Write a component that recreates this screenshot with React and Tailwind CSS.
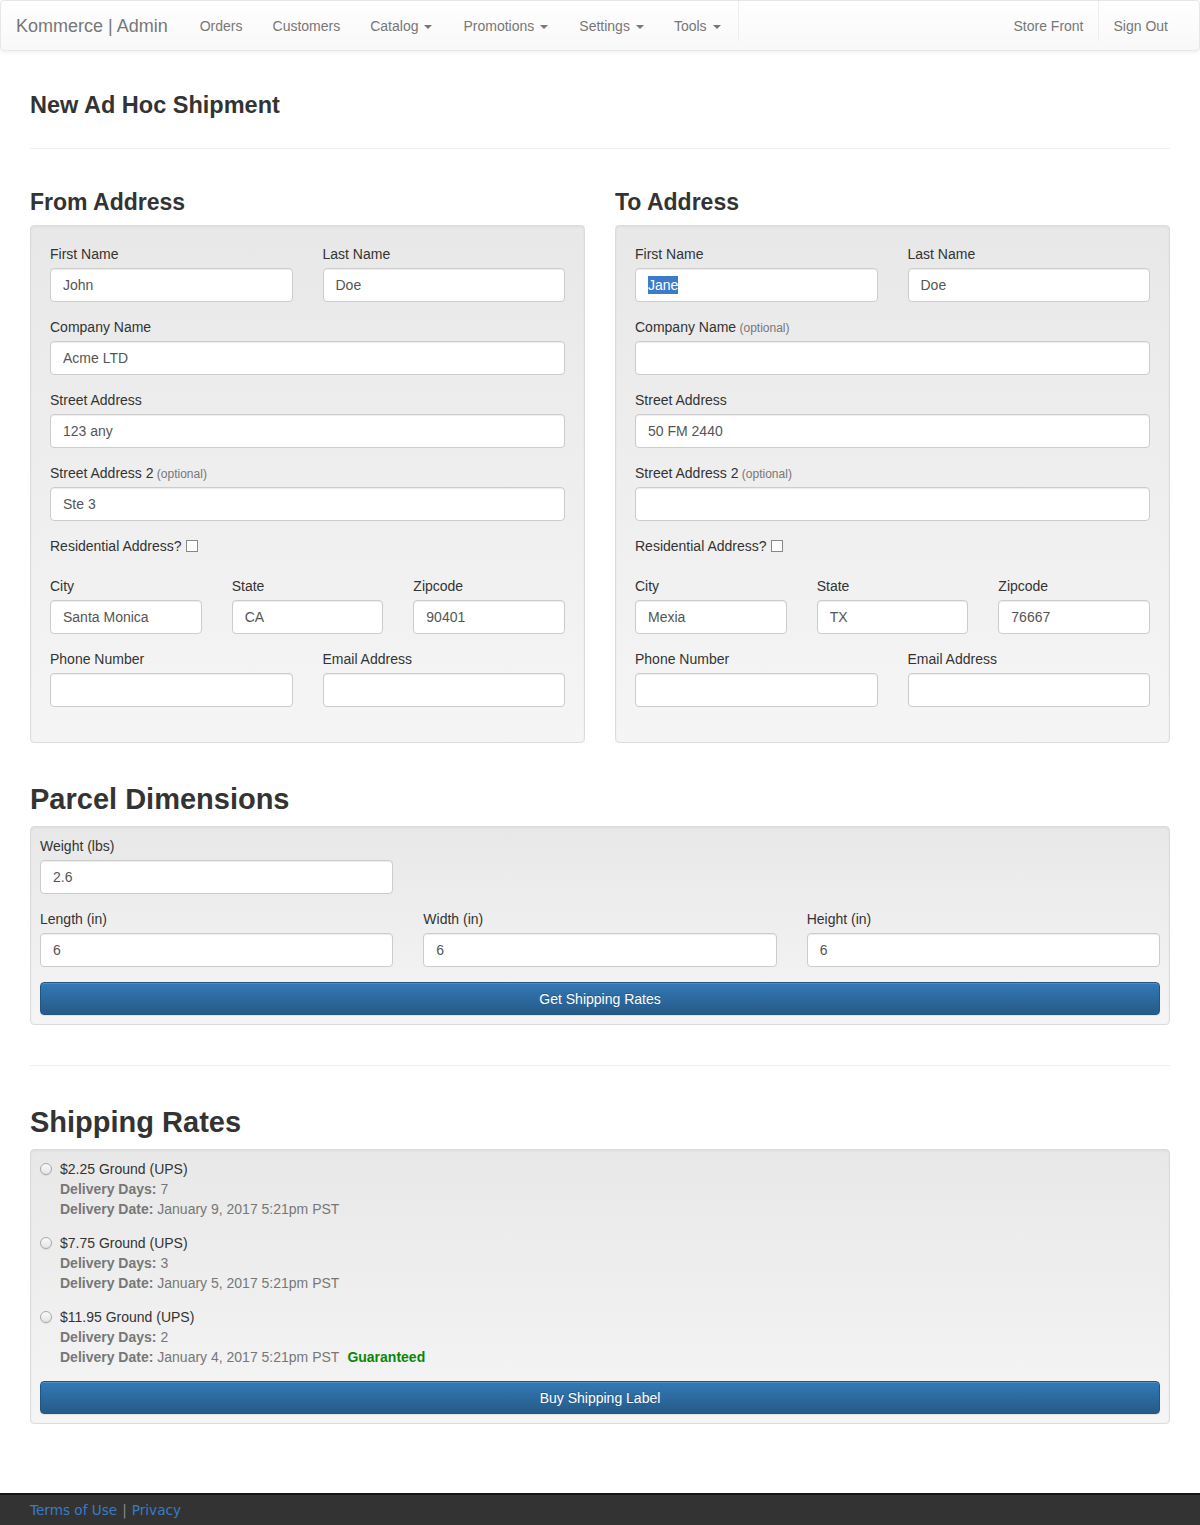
import React from "react";

const font = { fontFamily: '"Liberation Sans", Arial, Helvetica, sans-serif' };

function Caret() {
  return (
    <span className="inline-block ml-[6px] align-middle w-0 h-0 border-t-[4px] border-t-[#777] border-l-[4px] border-l-transparent border-r-[4px] border-r-transparent" />
  );
}

function NavLink({ children, caret, extra = "" }) {
  return (
    <a className={"px-[15px] leading-[50px] text-[14px] text-[#777] whitespace-nowrap " + extra}>
      {children}
      {caret && <Caret />}
    </a>
  );
}

function Label({ children, optional }) {
  return (
    <label className="block text-[14px] leading-[20px] text-[#333] mb-[4px]">
      {children}
      {optional && <span className="text-[12px] leading-[14px] text-[#777]"> (optional)</span>}
    </label>
  );
}

const inputCls =
  "block w-full h-[34px] px-[12px] text-[14px] text-[#555] bg-white border border-[#ccc] rounded-[4px] shadow-[inset_0_1px_1px_rgba(0,0,0,0.075)] outline-none";

function Field({ label, optional, value = "", selected }) {
  return (
    <div className="mb-[15px]">
      <Label optional={optional}>{label}</Label>
      {selected ? (
        <div className={inputCls + " flex items-center"}>
          <span className="bg-[#3d7bc8] text-white leading-[18px]">{value}</span>
        </div>
      ) : (
        <input className={inputCls} readOnly value={value} />
      )}
    </div>
  );
}

function Checkbox() {
  return (
    <span className="inline-block align-[-1px] ml-[4px] w-[12px] h-[12px] border border-[#888] bg-white" />
  );
}

const wellCls =
  "border border-[#dcdcdc] rounded-[4px] bg-gradient-to-b from-[#e8e8e8] to-[#f5f5f5] shadow-[inset_0_1px_3px_rgba(0,0,0,0.05),0_1px_0_rgba(255,255,255,0.1)]";

function AddressWell({ d }) {
  return (
    <div className={wellCls + " px-[19px] pt-[18px] pb-[20px]"}>
      <div className="grid grid-cols-2 gap-x-[30px]">
        <Field label="First Name" value={d.first} selected={d.selectFirst} />
        <Field label="Last Name" value={d.last} />
      </div>
      <Field label="Company Name" optional={d.companyOptional} value={d.company} />
      <Field label="Street Address" value={d.street} />
      <Field label="Street Address 2" optional value={d.street2} />
      <div className="mb-[20px] h-[20px] text-[14px] leading-[20px] text-[#333]">
        Residential Address?
        <Checkbox />
      </div>
      <div className="grid grid-cols-3 gap-x-[30px]">
        <Field label="City" value={d.city} />
        <Field label="State" value={d.state} />
        <Field label="Zipcode" value={d.zip} />
      </div>
      <div className="grid grid-cols-2 gap-x-[30px]">
        <Field label="Phone Number" value="" />
        <Field label="Email Address" value="" />
      </div>
    </div>
  );
}

function Button({ children }) {
  return (
    <button className="block w-full h-[33px] text-[14px] leading-[20px] text-white rounded-[4px] border border-[#245580] bg-gradient-to-b from-[#337ab7] to-[#265a88] [text-shadow:0_-1px_0_rgba(0,0,0,0.2)] shadow-[inset_0_1px_0_rgba(255,255,255,0.15),0_1px_1px_rgba(0,0,0,0.075)]">
      {children}
    </button>
  );
}

function Radio() {
  return (
    <span className="absolute left-0 top-[4px] w-[12px] h-[12px] rounded-full border border-[#a8a8a8] bg-gradient-to-b from-[#fafafa] to-[#e4e4e4] shadow-[0_1px_1px_rgba(0,0,0,0.08)]" />
  );
}

function Rate({ title, days, date, guaranteed }) {
  return (
    <div className="relative pl-[20px] text-[14px] leading-[20px]">
      <Radio />
      <div className="text-[#333]">{title}</div>
      <div className="text-[#777]">
        <b className="font-bold">Delivery Days:</b> {days}
      </div>
      <div className="text-[#777]">
        <b className="font-bold">Delivery Date:</b> {date}
        {guaranteed && <b className="font-bold text-[#0a870a] ml-[8px]">Guaranteed</b>}
      </div>
    </div>
  );
}

export default function App() {
  const from = {
    first: "John",
    last: "Doe",
    company: "Acme LTD",
    street: "123 any",
    street2: "Ste 3",
    city: "Santa Monica",
    state: "CA",
    zip: "90401",
  };
  const to = {
    first: "Jane",
    selectFirst: true,
    last: "Doe",
    company: "",
    companyOptional: true,
    street: "50 FM 2440",
    street2: "",
    city: "Mexia",
    state: "TX",
    zip: "76667",
  };
  return (
    <div style={font} className="w-[1200px] min-h-[1525px] flex flex-col bg-white text-[#333]">
      {/* Navbar */}
      <nav className="h-[51px] shrink-0 flex items-start border border-[#e7e7e7] rounded-[4px] bg-gradient-to-b from-white to-[#f8f8f8] shadow-[inset_0_1px_0_rgba(255,255,255,0.15),0_1px_5px_rgba(0,0,0,0.075)]">
        <a className="pl-[15px] pr-[17px] leading-[50px] text-[18px] text-[#777] whitespace-nowrap">
          Kommerce | Admin
        </a>
        <div className="flex border-r border-[#eee] h-[40px] items-start pr-[2px]">
          <NavLink>Orders</NavLink>
          <NavLink>Customers</NavLink>
          <NavLink caret>Catalog</NavLink>
          <NavLink caret extra="pl-[16px]">Promotions</NavLink>
          <NavLink caret extra="pl-[16px]">Settings</NavLink>
          <NavLink caret>Tools</NavLink>
        </div>
        <div className="ml-auto flex items-start pr-[16px]">
          <div className="border-r border-[#eee] h-[40px]">
            <NavLink extra="pr-[14px]">Store Front</NavLink>
          </div>
          <NavLink>Sign Out</NavLink>
        </div>
      </nav>

      <main className="flex-1 px-[30px]">
        <h1 className="mt-[41px] text-[23.5px] leading-[26px] font-bold text-[#333]">
          New Ad Hoc Shipment
        </h1>
        <div className="mt-[30px] border-t border-[#eee]" />

        <div className="grid grid-cols-2 gap-x-[30px]">
          <div>
            <h3 className="mt-[40px] mb-[10px] text-[23px] leading-[26px] font-bold text-[#333]">
              From Address
            </h3>
            <AddressWell d={from} />
          </div>
          <div>
            <h3 className="mt-[40px] mb-[10px] text-[23px] leading-[26px] font-bold text-[#333]">
              To Address
            </h3>
            <AddressWell d={to} />
          </div>
        </div>

        <h2 className="mt-[40px] mb-[10px] text-[29px] leading-[33px] font-bold text-[#333]">
          Parcel Dimensions
        </h2>
        <div className={wellCls + " p-[9px]"}>
          <div className="grid grid-cols-3 gap-x-[30px]">
            <Field label="Weight (lbs)" value="2.6" />
          </div>
          <div className="grid grid-cols-3 gap-x-[30px]">
            <Field label="Length (in)" value="6" />
            <Field label="Width (in)" value="6" />
            <Field label="Height (in)" value="6" />
          </div>
          <Button>Get Shipping Rates</Button>
        </div>

        <div className="mt-[40px] border-t border-[#eee]" />

        <h2 className="mt-[40px] mb-[10px] text-[29px] leading-[33px] font-bold text-[#333]">
          Shipping Rates
        </h2>
        <div className={wellCls + " p-[9px]"}>
          <div className="flex flex-col gap-[14px]">
            <Rate title="$2.25 Ground (UPS)" days="7" date="January 9, 2017 5:21pm PST" />
            <Rate title="$7.75 Ground (UPS)" days="3" date="January 5, 2017 5:21pm PST" />
            <Rate
              title="$11.95 Ground (UPS)"
              days="2"
              date="January 4, 2017 5:21pm PST"
              guaranteed
            />
          </div>
          <div className="mt-[14px]">
            <Button>Buy Shipping Label</Button>
          </div>
        </div>
      </main>

      <footer
        className="shrink-0 h-[32px] border-t-[2px] border-[#161616] bg-[#333] px-[30px] flex items-center text-[13.6px]"
        style={{ fontFamily: '"DejaVu Sans", Verdana, sans-serif' }}
      >
        <a className="text-[#3a7cc4]">Terms of Use</a>
        <span className="text-[#8a8a8a] mx-[5px]">|</span>
        <a className="text-[#3a7cc4]">Privacy</a>
      </footer>
    </div>
  );
}
